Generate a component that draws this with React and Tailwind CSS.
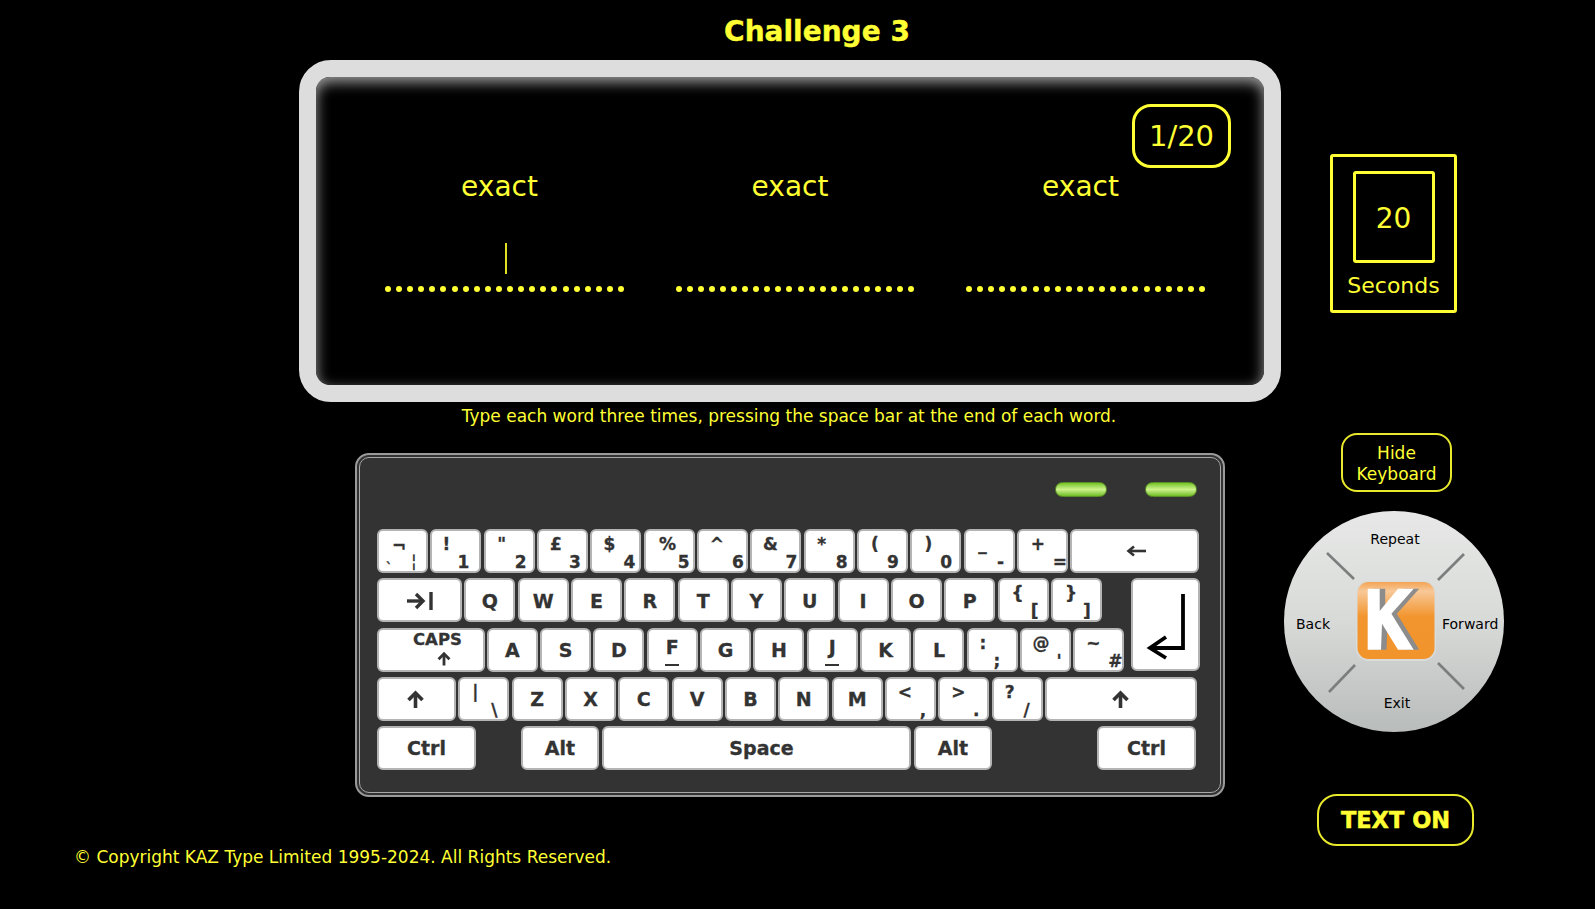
import React from "react";

function Key({ w = "w-[51px]", children, className = "" }) {
  return (
    <div className={`${w} h-[44px] shrink-0 bg-white border-2 border-[#b4b4b4] rounded-[6px] text-[#333333] font-bold [-webkit-text-stroke:0.3px_#333333] ${className}`}>
      {children}
    </div>
  );
}

function Letter({ ch, w, size = "text-[19px]", extra = "" }) {
  return (
    <Key w={w} className={`flex items-center justify-center pt-[1px] ${size} ${extra}`}>
      {ch}
    </Key>
  );
}

function Pair({ t, b, tl, bl }) {
  return (
    <Key className="pt-[4px] text-[17px]">
      <span className={`block w-[20px] h-[18px] leading-[18px] text-center ${tl}`}>{t}</span>
      <span className={`block w-[20px] h-[18px] leading-[18px] text-center ${bl}`}>{b}</span>
    </Key>
  );
}

function Home({ ch }) {
  return (
    <Key className="flex flex-col items-center pt-[6px] text-[19px]">
      <span className="block h-[22px] leading-[22px]">{ch}</span>
      <span className="block w-[14px] h-[2px] mt-[6px] bg-[#333333]" />
    </Key>
  );
}

function UpArrow({ className }) {
  return (
    <svg viewBox="0 0 18 18" className={className} fill="none" stroke="#333333" strokeWidth="3.6">
      <path d="M9 18V3" />
      <path d="M2 10L9 3L16 10" />
    </svg>
  );
}

const row1 = [
  ["!", "1", "ml-[4px]", "ml-[21px]"],
  ['"', "2", "ml-[6px]", "ml-[25px]"],
  ["£", "3", "ml-[7px]", "ml-[26px]"],
  ["$", "4", "ml-[7px]", "ml-[27px]"],
  ["%", "5", "ml-[12px]", "ml-[28px]"],
  ["^", "6", "ml-[8px]", "ml-[29px]"],
  ["&", "7", "ml-[8px]", "ml-[29px]"],
  ["*", "8", "ml-[6px]", "ml-[26px]"],
  ["(", "9", "ml-[6px]", "ml-[24px]"],
  [")", "0", "ml-[6px]", "ml-[24px]"],
  ["_", "-", "ml-[7px]", "ml-[25px]"],
  ["+", "=", "ml-[9px]", "ml-[31px]"],
];

const row4 = [
  ["<", ",", "ml-[8px]", "ml-[26px]"],
  [">", ".", "ml-[8px]", "ml-[26px]"],
  ["?", "/", "ml-[6px]", "ml-[23px]"],
];

function KeyRows() {
  return (
    <div className="flex flex-col gap-[5.25px]">
      <div className="flex gap-[2.33px]">
        <Key className="pt-[4px] text-[17px]">
          <span className="block w-[20px] h-[18px] mt-[2px] leading-[18px] text-center ml-[10px]">¬</span>
          <span className="flex h-[18px] leading-[18px] text-[12px]">
            <span className="ml-[7px] mt-[4px]">`</span>
            <span className="ml-[19px] mt-[-3px] text-[17px] font-normal">¦</span>
          </span>
        </Key>
        {row1.map(([t, b, tl, bl]) => (
          <Pair key={b} t={t} b={b} tl={tl} bl={bl} />
        ))}
        <Key w="w-[129px]" className="flex items-center justify-center">
          <svg viewBox="0 0 20 12" className="w-[20px] h-[12px] ml-[2px]" fill="none" stroke="#333333" strokeWidth="2.6">
            <path d="M20 6H3" />
            <path d="M8 1.5L2.5 6L8 10.5" />
          </svg>
        </Key>
      </div>

      <div className="flex">
        <div className="flex flex-col gap-[5.25px] w-[747px]">
          <div className="flex gap-[2.33px]">
            <Key w="w-[85px]" className="flex items-center justify-center">
              <svg viewBox="0 0 26 20" className="w-[26px] h-[20px] mt-[2px]" fill="none" stroke="#333333" strokeWidth="3.4">
                <path d="M0 10H16" />
                <path d="M9 3L16 10L9 17" />
                <path d="M24 1V19" />
              </svg>
            </Key>
            {["Q", "W", "E", "R", "T", "Y", "U", "I", "O", "P"].map((c) => (
              <Letter key={c} ch={c} />
            ))}
            <Pair t="{" b="[" tl="ml-[8px]" bl="ml-[25px]" />
            <Pair t="}" b="]" tl="ml-[8px]" bl="ml-[24px]" />
          </div>
          <div className="flex gap-[2.33px]">
            <Key w="w-[107.5px]" className="flex flex-col items-start text-[16.5px] leading-[19px]">
              <span className="ml-[34px]">CAPS</span>
              <UpArrow className="w-[14px] h-[15px] ml-[58px] mt-[2px]" />
            </Key>
            {["A", "S", "D"].map((c) => (
              <Letter key={c} ch={c} />
            ))}
            <Home ch="F" />
            <Letter ch="G" />
            <Letter ch="H" />
            <Home ch="J" />
            <Letter ch="K" />
            <Letter ch="L" />
            <Pair t=":" b=";" tl="ml-[4px]" bl="ml-[18px]" />
            <Pair t="@" b="'" tl="ml-[9px]" bl="ml-[27px]" />
            <Pair t="~" b="#" tl="ml-[8px]" bl="ml-[30px]" />
          </div>
        </div>
        <div className="w-[69px] h-[93px] ml-[7px] bg-white border-2 border-[#b4b4b4] rounded-[6px]">
          <svg viewBox="0 0 65 89" className="w-full h-full" fill="none" stroke="#000000" strokeWidth="3.8">
            <path d="M50 14V68H17" />
            <path d="M33 57L17 68L33 78" />
          </svg>
        </div>
      </div>

      <div className="flex gap-[2.33px]">
        <Key w="w-[79px]" className="flex items-center justify-center">
          <UpArrow className="w-[19px] h-[18px] ml-[-3px]" />
        </Key>
        <Pair t="|" b="\" tl="ml-[5px]" bl="ml-[24px]" />
        {["Z", "X", "C", "V", "B", "N", "M"].map((c) => (
          <Letter key={c} ch={c} />
        ))}
        {row4.map(([t, b, tl, bl]) => (
          <Pair key={b} t={t} b={b} tl={tl} bl={bl} />
        ))}
        <Key w="w-[152px]" className="flex items-center justify-center">
          <UpArrow className="w-[19px] h-[18px]" />
        </Key>
      </div>

      <div className="flex">
        <Letter ch="Ctrl" w="w-[99px]" />
        <Letter ch="Alt" w="w-[78px] ml-[45px]" />
        <Letter ch="Space" w="w-[309px] ml-[3px]" extra="pl-[10px]" />
        <Letter ch="Alt" w="w-[78px] ml-[3px]" />
        <Letter ch="Ctrl" w="w-[99px] ml-[105px]" />
      </div>
    </div>
  );
}

function Led() {
  return (
    <div className="w-[52px] h-[15px] rounded-full bg-linear-to-b from-[#74c41c] via-[#cdf28a] to-[#6fbd1c] border border-[#5a8f26]" />
  );
}

function Keyboard() {
  return (
    <div className="w-[870px] h-[344px] mt-[23px] p-[2px] border-2 border-[#9a9a9a] rounded-[14px] bg-[#333333]">
      <div className="h-full border border-[#a8a8a8] rounded-[10px] pl-[17px] pt-[24px]">
        <div className="flex justify-end pr-[23px] gap-[38px] mb-[32px]">
          <Led />
          <Led />
        </div>
        <KeyRows />
      </div>
    </div>
  );
}

function Word({ caret }) {
  return (
    <div className="w-[239px] flex flex-col items-center">
      <div className="pr-[10px] h-[34px] leading-[34px] text-[28px]">exact</div>
      {caret ? (
        <div className="w-[2px] h-[31px] mt-[39px] ml-[3px] bg-[#e0e020]" />
      ) : (
        <div className="h-[31px] mt-[39px]" />
      )}
      <div className="flex w-full gap-[5.1px] mt-[12px]">
        {Array.from({ length: 22 }, (_, i) => (
          <span key={i} className="w-[6px] h-[6px] rounded-full bg-[#ffff33] shrink-0" />
        ))}
      </div>
    </div>
  );
}

function Logo() {
  const kPts = "11.7,7.7 23.7,7.7 23.7,30 42,7.7 57.7,7.7 35.4,32.7 57.7,68.7 42,68.7 26,42.7 25,68.7 11.7,68.7";
  return (
    <svg viewBox="0 0 80 81" className="w-[80px] h-[81px]">
      <defs>
        <linearGradient id="kbg" x1="0" y1="0" x2="0" y2="1">
          <stop offset="0" stopColor="#f3a555" />
          <stop offset="0.12" stopColor="#f8c897" />
          <stop offset="0.45" stopColor="#f2952e" />
          <stop offset="1" stopColor="#f2942c" />
        </linearGradient>
      </defs>
      <rect x="0" y="0" width="80" height="80" rx="13" fill="#d9dcda" />
      <rect x="1.5" y="1" width="77" height="77" rx="11" fill="url(#kbg)" />
      <polygon points={kPts} fill="#8c8c8c" transform="translate(5.5 0)" />
      <polygon points={kPts} fill="#ffffff" />
    </svg>
  );
}

function Dial() {
  return (
    <div className="relative w-[220px] h-[221px] mt-[19px] rounded-full bg-linear-to-b from-[#e7e8e7] via-[#d8dad8] to-[#b8bcba] text-black text-[14px] grid grid-cols-[72px_80px_68px] grid-rows-[70px_81px_70px]">
      <div className="col-start-2 flex justify-center items-start pt-[18px] pr-[2px] whitespace-nowrap">Repeat</div>
      <div className="col-start-1 row-start-2 flex items-center pl-[12px] pt-[5px]">Back</div>
      <div className="col-start-2 row-start-2">
        <Logo />
      </div>
      <div className="col-start-3 row-start-2 flex items-center pl-[6px] pt-[5px] whitespace-nowrap">Forward</div>
      <div className="col-start-2 row-start-3 flex justify-center pl-[2px] pt-[31px]">Exit</div>
      <svg viewBox="0 0 220 221" className="absolute inset-0 w-[220px] h-[221px]" fill="none" stroke="#7c7e7d" strokeWidth="2.6">
        <path d="M43 42L70 68" />
        <path d="M180 43L154 69" />
        <path d="M71 154L45 181" />
        <path d="M154 152L180 178" />
      </svg>
    </div>
  );
}

export default function App() {
  return (
    <div className="w-[1595px] h-[909px] overflow-hidden bg-black text-[#ffff33] font-['DejaVu_Sans',sans-serif]">
      <div className="h-[60px] flex items-center justify-center pl-[39px] pt-[4px] text-[28px] font-bold [-webkit-text-stroke:0.4px_#ffff33]">Challenge 3</div>

      <div className="flex items-start pl-[299px]">
        <div className="relative w-[982px] h-[342px] border-[17px] border-[#dddddd] rounded-[32px]">
          <div className="w-full h-full rounded-[14px] bg-black shadow-[inset_0_5px_14px_rgba(255,255,255,0.62)] pl-[69px] pt-[93px]">
            <div className="flex gap-[51.5px]">
              <Word caret />
              <Word />
              <Word />
            </div>
          </div>
          <div className="absolute right-[33px] top-[27px] w-[99px] h-[64px] pt-[2px] border-[3px] border-[#ffff33] rounded-[19px] flex items-center justify-center text-[29px]">1/20</div>
        </div>

        <div className="w-[127px] h-[159px] ml-[49px] mt-[94px] border-[3px] border-[#ffff33] rounded-[3px] flex flex-col items-center pt-[14px]">
          <div className="w-[82px] h-[92px] pt-[3px] border-[3px] border-[#ffff33] rounded-[3px] flex items-center justify-center text-[28px]">20</div>
          <div className="mt-[9px] text-[22px] leading-[28px]">Seconds</div>
        </div>
      </div>

      <div className="h-[28px] flex items-center justify-center pr-[17px] pt-[1px] text-[17px]">Type each word three times, pressing the space bar at the end of each word.</div>

      <div className="flex items-start pl-[355px]">
        <Keyboard />
        <div className="ml-[59px] w-[220px] flex flex-col items-start">
          <div className="ml-[57px] mt-[3px] w-[111px] h-[59px] pt-[2px] border-2 border-[#e8e82c] rounded-[16px] flex flex-col items-center justify-center text-[17px] leading-[21px]">
            <span>Hide</span>
            <span>Keyboard</span>
          </div>
          <Dial />
          <div className="ml-[33px] mt-[62px] w-[157px] h-[52px] pt-[1px] border-2 border-[#e8e82c] rounded-[20px] flex items-center justify-center text-[22.5px] font-bold [-webkit-text-stroke:0.5px_#ffff33]">TEXT ON</div>
        </div>
      </div>

      <div className="pl-[74px] mt-[-1px] text-[17px]">© Copyright KAZ Type Limited 1995-2024. All Rights Reserved.</div>
    </div>
  );
}
